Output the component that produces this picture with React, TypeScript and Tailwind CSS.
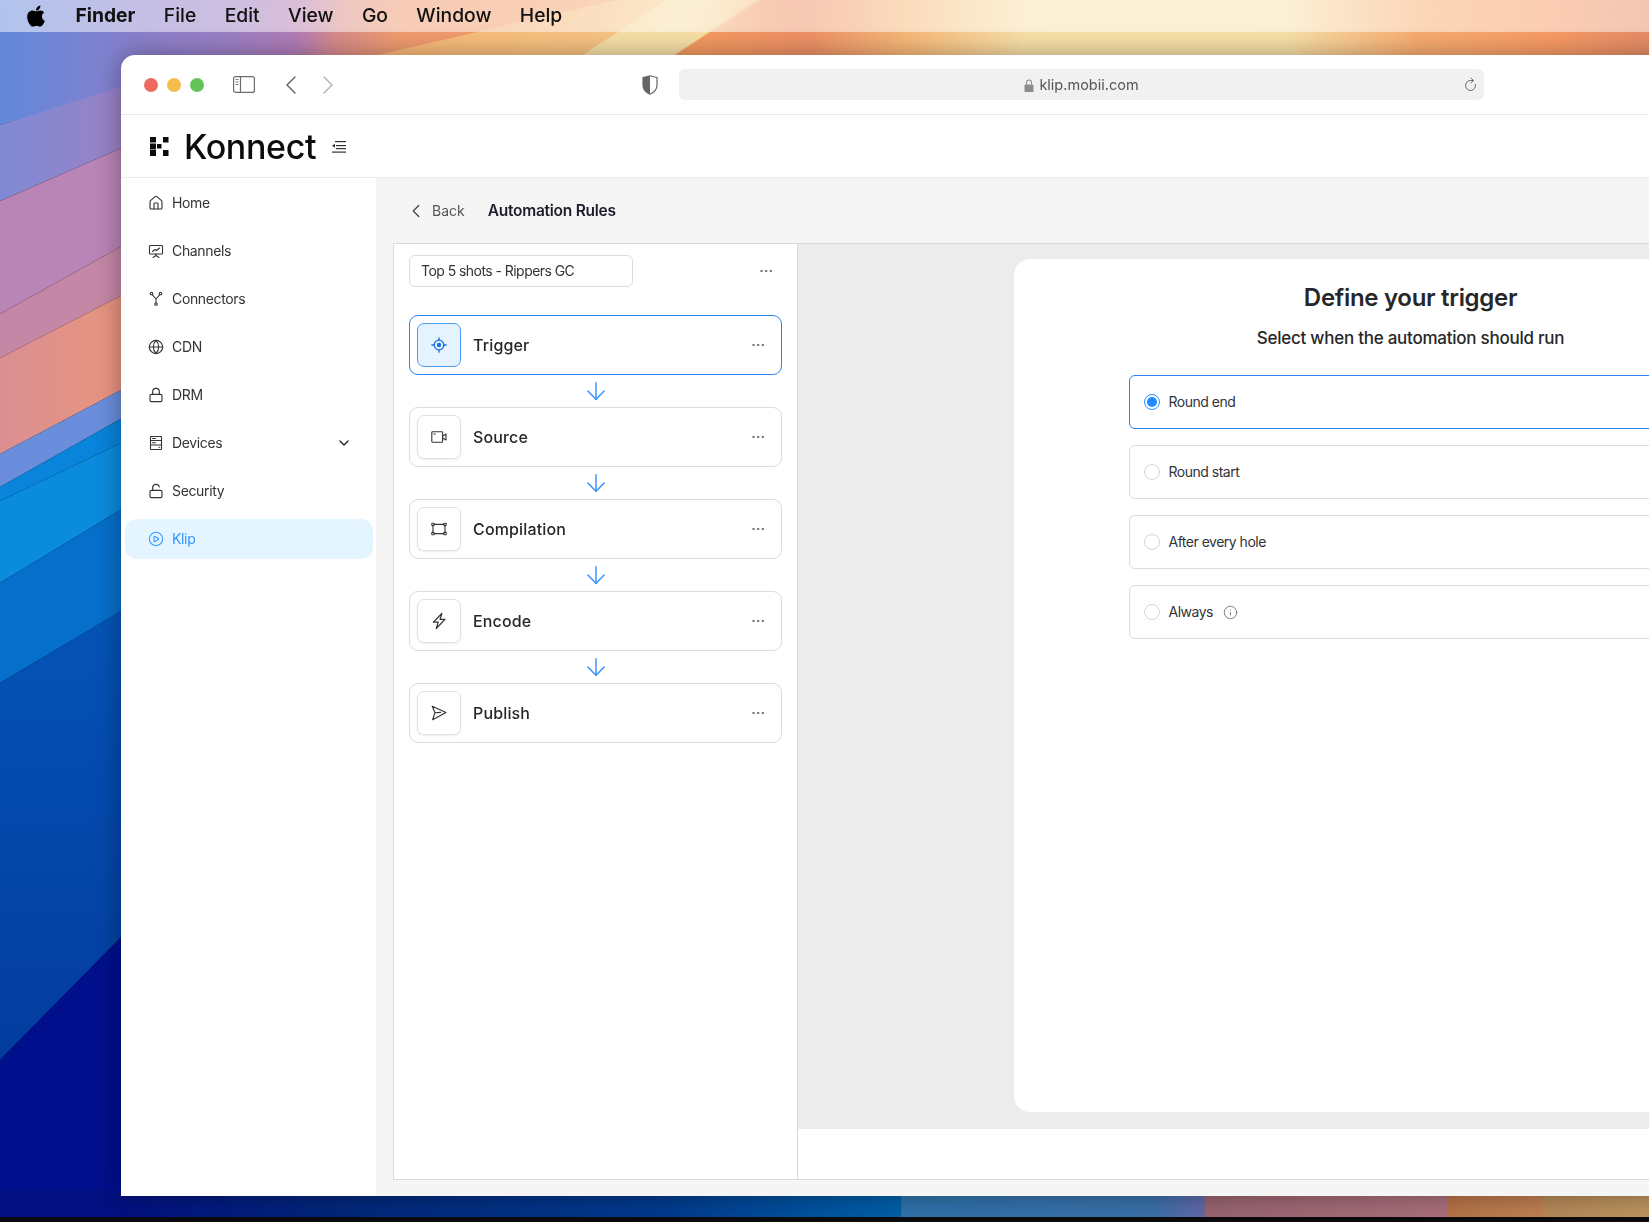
import { ArrowDown, ChevronDown, ChevronLeft, ChevronRight, CirclePlay, Ellipsis, Globe, House, Info, Lock, LockOpen } from 'lucide-react';
import { FaApple } from 'react-icons/fa';
import type { ReactNode } from 'react';

const Glyph = ({ className, children }: { className?: string; children: ReactNode }) => (
  <svg viewBox="0 0 16 16" fill="none" stroke="currentColor" strokeWidth="1.1" strokeLinecap="round" strokeLinejoin="round" className={className}>
    {children}
  </svg>
);

const ChannelsIcon = () => (
  <Glyph className="h-4 w-4">
    <rect x="1.500" y="2.500" width="13" height="8.500" rx="0.800" />
    <path d="M4.500 8.500 7 6.500l1.500 1L11.500 5" />
    <path d="M8 11v1.500M8 12.500 5 14.500M8 12.500l3 2" />
  </Glyph>
);

const ConnectorsIcon = () => (
  <Glyph className="h-4 w-4">
    <circle cx="3.500" cy="2.500" r="1.300" />
    <circle cx="12.500" cy="2.500" r="1.300" />
    <circle cx="8" cy="13" r="1.300" />
    <path d="M4.200 3.700 8 8l3.800-4.300M8 8v3.700" />
  </Glyph>
);

const DevicesIcon = () => (
  <Glyph className="h-4 w-4">
    <rect x="2.500" y="1.500" width="11" height="13" rx="0.600" />
    <path d="M2.500 5.500h11M2.500 10h11M4.500 3.500h3M4.500 7.800h3M11 12.300h.6" />
  </Glyph>
);

const TriggerIcon = () => (
  <svg viewBox="0 0 16 16" fill="none" stroke="currentColor" strokeWidth="1.300" strokeLinecap="round" className="h-4 w-4">
    <circle cx="8" cy="8" r="4.800" />
    <circle cx="8" cy="8" r="2.200" fill="currentColor" stroke="none" />
    <path d="M8 .8v2.400M8 12.800v2.400M.8 8h2.400M12.800 8h2.400" />
  </svg>
);

const SourceIcon = () => (
  <Glyph className="h-4 w-4">
    <rect x="0.800" y="2.800" width="10.800" height="10.400" rx="0.800" />
    <path d="M11.600 7 15 5v6l-3.400-2M2.800 5h1.400" />
  </Glyph>
);

const CompilationIcon = () => (
  <Glyph className="h-4 w-4">
    <rect x="0.800" y="2.200" width="2.400" height="2.400" rx="0.600" />
    <rect x="12.800" y="2.200" width="2.400" height="2.400" rx="0.600" />
    <rect x="0.800" y="11.400" width="2.400" height="2.400" rx="0.600" />
    <rect x="12.800" y="11.400" width="2.400" height="2.400" rx="0.600" />
    <path d="M3.200 3.400h9.600M3.200 12.600h9.600M2 4.600v6.800M14 4.600v6.800" />
  </Glyph>
);

const EncodeIcon = () => (
  <Glyph className="h-[18px] w-[18px]">
    <path d="M10.500 1.300 3 9h4.300L5.600 14.700 13.300 6.500H9L10.500 1.300z" />
  </Glyph>
);

const PublishIcon = () => (
  <Glyph className="h-4 w-4">
    <path d="M1.200 1.300 15 7.400 1.600 14.700 4 7.800zM4 7.800l5.500-.4" />
  </Glyph>
);

const LogoMark = () => (
  <svg viewBox="0 0 19 19" className="h-[19px] w-[19px] fill-[#0c0c0c]">
    <rect x="0" y="0" width="6" height="5.500" />
    <rect x="13" y="0" width="5.500" height="5.500" />
    <rect x="0" y="6.500" width="6" height="6" />
    <rect x="7" y="7" width="4.500" height="4.500" />
    <rect x="0" y="13" width="6" height="6" />
    <rect x="13" y="13" width="5.500" height="6" />
  </svg>
);

const CollapseIcon = () => (
  <svg viewBox="0 0 14 12" className="h-3 w-[14px] fill-[#333]">
    <rect x="3" y="0" width="11" height="1.200" />
    <path d="M0 4.700 3 2.700v4z" />
    <rect x="4" y="4" width="10" height="1.200" />
    <rect x="4" y="7" width="10" height="1.200" />
    <rect x="0" y="10.500" width="14" height="1.200" />
  </svg>
);

const SidebarToggle = () => (
  <svg viewBox="0 0 22 17" fill="none" stroke="#6d6d6d" strokeWidth="1.200" className="h-[17px] w-[22px]">
    <rect x="0.600" y="0.600" width="20.800" height="15.800" rx="2" />
    <path d="M7.500 0.600v15.800" />
    <path d="M2.500 3.500h3M2.500 6h3M2.500 8.500h3" strokeWidth="0.900" />
  </svg>
);

const ShieldIcon = () => (
  <svg viewBox="0 0 16 20" className="h-5 w-4">
    <path d="M8 .8C5.600 1.600 3.500 2.200 1 2.500v7.800c0 4 3 7.200 7 9 4-1.800 7-5 7-9V2.500C12.500 2.200 10.400 1.600 8 .8z" fill="#fff" stroke="#666" strokeWidth="1.200" />
    <path d="M8 .8C5.600 1.600 3.500 2.200 1 2.500v7.800c0 4 3 7.200 7 9z" fill="#666" />
  </svg>
);

const ReloadIcon = () => (
  <svg viewBox="0 0 14 16" fill="none" stroke="#666" strokeWidth="1" strokeLinecap="round" strokeLinejoin="round" className="h-4 w-[14px]">
    <path d="M11.500 7.500A5 5 0 1 1 6.500 3.500H9" />
    <path d="M7 1 9.400 3.500 7 6" />
  </svg>
);

const Wallpaper = () => (
  <svg viewBox="0 0 1649 1222" className="absolute inset-0 h-[1222px] w-[1649px]">
    <defs>
      <linearGradient id="band0" x1="0" x2="1" y1="0" y2="0">
        <stop offset="0" stopColor="#6188da" />
        <stop offset="1" stopColor="#8a7fcc" />
      </linearGradient>
      <linearGradient id="band1" x1="0" x2="1" y1="0" y2="0">
        <stop offset="0" stopColor="#7f8ad4" />
        <stop offset="1" stopColor="#9d80c4" />
      </linearGradient>
      <linearGradient id="band4" x1="0" x2="1" y1="0" y2="0">
        <stop offset="0" stopColor="#db8f92" />
        <stop offset="1" stopColor="#ea957c" />
      </linearGradient>
      <linearGradient id="deep" x1="0" x2="0" y1="0" y2="1">
        <stop offset="0" stopColor="#0554b8" />
        <stop offset="1" stopColor="#033c9e" />
      </linearGradient>
      <linearGradient id="peach" x1="0" x2="1" y1="0" y2="0">
        <stop offset="0" stopColor="#f9b874" />
        <stop offset="1" stopColor="#f6cb8c" />
      </linearGradient>
      <linearGradient id="top" x1="0" x2="1649" y1="0" y2="0" gradientUnits="userSpaceOnUse">
        <stop offset="0" stopColor="#6188da" />
        <stop offset="0.08" stopColor="#8a7fcc" />
        <stop offset="0.14" stopColor="#9b7fc4" />
        <stop offset="0.18" stopColor="#b27cb6" />
        <stop offset="0.205" stopColor="#d88c88" />
        <stop offset="0.24" stopColor="#f09a70" />
        <stop offset="0.42" stopColor="#f59a60" />
        <stop offset="0.49" stopColor="#ee9066" />
        <stop offset="0.55" stopColor="#f7b878" />
        <stop offset="0.62" stopColor="#f8e0a8" />
        <stop offset="0.78" stopColor="#f8e0a8" />
        <stop offset="0.86" stopColor="#f8ac70" />
        <stop offset="0.94" stopColor="#f89b64" />
        <stop offset="1" stopColor="#e68c68" />
      </linearGradient>
      <linearGradient id="bottom" x1="0" x2="1649" y1="0" y2="0" gradientUnits="userSpaceOnUse">
        <stop offset="0.07" stopColor="#021082" />
        <stop offset="0.2" stopColor="#02267a" />
        <stop offset="0.4" stopColor="#023a8e" />
        <stop offset="0.546" stopColor="#0060a8" />
        <stop offset="0.547" stopColor="#2f72aa" />
        <stop offset="0.7" stopColor="#3a70aa" />
        <stop offset="0.73" stopColor="#6268a8" />
        <stop offset="0.731" stopColor="#986470" />
        <stop offset="0.877" stopColor="#aa6f7c" />
        <stop offset="0.878" stopColor="#b57348" />
        <stop offset="0.935" stopColor="#bf8052" />
        <stop offset="0.936" stopColor="#b48858" />
        <stop offset="1" stopColor="#bd9460" />
      </linearGradient>
    </defs>
    <rect width="1649" height="60" fill="url(#top)" />
    <polygon points="617,0 760,0 667,60 356,60" fill="url(#peach)" />
    <polygon points="667,0 756,0 667,60 575,60" fill="#f7dfa6" />
    <polygon points="0,0 140,0 140,84 0,125" fill="url(#band0)" />
    <polygon points="0,125 140,81 140,140 0,201" fill="url(#band1)" />
    <polygon points="0,201 140,140 140,236 0,314" fill="#b984b6" />
    <polygon points="0,314 140,236 140,286 0,358" fill="#c487a6" />
    <polygon points="0,358 140,286 140,380 0,454" fill="url(#band4)" />
    <polygon points="0,454 140,380 140,408 0,487" fill="#6a8edb" />
    <polygon points="0,487 140,408 140,434 0,501" fill="#0884da" />
    <polygon points="0,501 140,434 140,498 0,583" fill="#0b8bdc" />
    <polygon points="0,583 140,498 140,600 0,683" fill="#056fcb" />
    <polygon points="0,683 140,600 140,918 0,1060" fill="url(#deep)" />
    <polygon points="0,1060 140,918 140,1222 0,1222" fill="#000f8c" />
    <rect x="0" y="1190" width="1649" height="32" fill="url(#bottom)" />
    <rect x="0" y="1217" width="1649" height="5" fill="#0b0b0b" />
  </svg>
);

const navItems = [
  { label: 'Home', icon: <House className="h-4 w-4" strokeWidth={1.700} /> },
  { label: 'Channels', icon: <ChannelsIcon /> },
  { label: 'Connectors', icon: <ConnectorsIcon /> },
  { label: 'CDN', icon: <Globe className="h-4 w-4" strokeWidth={1.700} /> },
  { label: 'DRM', icon: <Lock className="h-4 w-4" strokeWidth={1.700} /> },
  { label: 'Devices', icon: <DevicesIcon /> },
  { label: 'Security', icon: <LockOpen className="h-4 w-4" strokeWidth={1.700} /> },
  { label: 'Klip', icon: <CirclePlay className="h-4 w-4" strokeWidth={1.600} /> },
];

const steps = [
  { label: 'Trigger', icon: <TriggerIcon /> },
  { label: 'Source', icon: <SourceIcon /> },
  { label: 'Compilation', icon: <CompilationIcon /> },
  { label: 'Encode', icon: <EncodeIcon /> },
  { label: 'Publish', icon: <PublishIcon /> },
];

const triggerOptions = ['Round end', 'Round start', 'After every hole', 'Always'];

const App = () => {
  return (
    <div className="relative h-[1222px] w-[1649px] overflow-hidden bg-black font-['Inter',sans-serif] text-[#27272a]">
      <Wallpaper />

      {/* Menu bar */}
      <div className="relative flex h-8 items-center gap-[28.400px] bg-white/50 pb-[2px] pl-[26px] text-[19.300px] font-medium text-[#111] backdrop-blur-xl">
        <FaApple className="mr-[1px] mt-[2px] h-[24px] w-[20px] text-black" />
        <span className="font-bold">Finder</span>
        <span>File</span>
        <span>Edit</span>
        <span>View</span>
        <span>Go</span>
        <span>Window</span>
        <span>Help</span>
      </div>

      {/* Browser window */}
      <div className="absolute left-[121px] top-[55px] flex h-[1141px] w-[1920px] flex-col overflow-hidden rounded-t-[14px] bg-white shadow-[0_0_26px_rgba(0,0,0,0.35)]">
        <div className="flex h-[60px] shrink-0 items-center border-b border-[#e9e9e9] pl-[23px]">
          <div className="flex gap-[9px]">
            <span className="h-[14px] w-[14px] rounded-full bg-[#ee6a5f]" />
            <span className="h-[14px] w-[14px] rounded-full bg-[#f5bd4f]" />
            <span className="h-[14px] w-[14px] rounded-full bg-[#61c454]" />
          </div>
          <div className="ml-[29px]"><SidebarToggle /></div>
          <ChevronLeft className="ml-[20px] h-8 w-8 text-[#666]" strokeWidth={1.100} />
          <ChevronRight className="ml-[5px] h-8 w-8 text-[#b5b5b5]" strokeWidth={1.100} />
          <div className="ml-[298px]"><ShieldIcon /></div>
          <div className="relative ml-[21px] flex h-[31px] w-[805px] items-center justify-center gap-[5px] rounded-md bg-[#f1f1f1] pt-[1px] text-[14.500px] text-[#555]">
            <svg viewBox="0 0 10 13" className="h-[13px] w-[10px] fill-[#8d8d8d]">
              <path d="M2 5.500V3.500a3 3 0 0 1 6 0v2h-1V3.500a2 2 0 0 0-4 0v2z" />
              <rect x="0.500" y="5.500" width="9" height="7.500" rx="1" />
            </svg>
            <span>klip.mobii.com</span>
            <div className="absolute right-[6px] top-[8px]"><ReloadIcon /></div>
          </div>
        </div>

        <div className="flex h-[63px] shrink-0 items-center border-b border-[#ececec] pl-[29px]">
          <LogoMark />
          <span className="ml-[15px] mt-[2px] text-[34px] font-medium leading-none tracking-[-0.35px] text-[#0c0c0c]">Konnect</span>
          <div className="ml-[16px] mt-[1px]"><CollapseIcon /></div>
        </div>

        <div className="flex min-h-0 flex-1">
          <nav className="flex w-[255px] shrink-0 flex-col gap-2 pl-1 pr-[3px] pt-[5px]">
            {navItems.map((item) => (
              <div
                key={item.label}
                className={`flex h-10 items-center gap-2 rounded-xl pl-[23px] pr-[21px] text-sm tracking-[-0.35px] ${
                  item.label === 'Klip' ? 'bg-[#e4f5ff] text-[#2f96ff]' : 'text-[#333338]'
                }`}
              >
                {item.icon}
                <span className="flex-1">{item.label}</span>
                {item.label === 'Devices' && <ChevronDown className="h-4 w-4 text-[#222]" strokeWidth={2} />}
              </div>
            ))}
          </nav>

          <main className="flex min-w-0 flex-1 flex-col bg-[#f5f5f5] px-[17px] pb-4">
            <div className="flex h-[65px] shrink-0 items-center pl-3 pt-[1px]">
              <ChevronLeft className="h-[22px] w-[22px] text-[#444]" strokeWidth={1.400} />
              <span className="ml-[5px] text-sm text-[#55555a]">Back</span>
              <span className="ml-[23px] text-[15.500px] font-semibold tracking-[-0.25px] text-[#1c1c2b]">Automation Rules</span>
            </div>

            <div className="flex min-h-0 flex-1 border border-[#d9d9d9] bg-white">
              <div className="flex w-[404px] shrink-0 flex-col border-r border-[#d9d9d9] px-[15px] pt-[11px]">
                <div className="flex items-center justify-between pr-2">
                  <div className="flex h-8 w-[224px] items-center rounded-md border border-[#dcdcdc] pl-[11px] text-sm tracking-[-0.55px] text-[#333338]">
                    Top 5 shots - Rippers GC
                  </div>
                  <Ellipsis className="h-4 w-4 text-[#555]" strokeWidth={1.500} />
                </div>

                <div className="mt-7 flex flex-col items-center">
                  {steps.map((step, index) => {
                    const active = index === 0;
                    return (
                      <div key={step.label} className="flex w-full flex-col items-center">
                        {index > 0 && (
                          <div className="flex h-8 items-center justify-center">
                            <ArrowDown className="h-7 w-7 text-[#3d94ff]" strokeWidth={1.300} />
                          </div>
                        )}
                        <div
                          className={`flex h-[60px] w-full items-center rounded-[9px] border pl-[7px] pr-[15px] ${
                            active ? 'border-[#2b83f0]' : 'border-[#dcdcdc]'
                          }`}
                        >
                          <div
                            className={`flex h-[44px] w-[44px] items-center justify-center rounded-[7px] border ${
                              active ? 'border-[#4a9cf5] bg-[#e5f3ff] text-[#1a6fe0]' : 'border-[#e2e2e2] text-[#333] shadow-[0_1px_2px_rgba(0,0,0,0.08)]'
                            }`}
                          >
                            {step.icon}
                          </div>
                          <span className="ml-3 flex-1 text-base font-medium tracking-[0.15px] text-[#27272a]">{step.label}</span>
                          <Ellipsis className="h-4 w-4 text-[#555]" strokeWidth={1.500} />
                        </div>
                      </div>
                    );
                  })}
                </div>
              </div>

              <div className="flex min-w-0 flex-1 flex-col">
                <div className="flex min-h-0 flex-1 bg-[#ececec] px-[216px] pb-[17px] pt-[15px]">
                  <div className="flex w-full flex-col items-center rounded-2xl bg-white pt-[23px]">
                    <h1 className="text-2xl font-semibold tracking-[-0.3px] text-[#27272a]">Define your trigger</h1>
                    <p className="mt-[12px] text-[17px] font-medium leading-6 tracking-[-0.25px] text-[#27272a]">Select when the automation should run</p>
                    <div className="mt-[25px] flex w-[564px] flex-col gap-4">
                      {triggerOptions.map((option, index) => (
                        <div
                          key={option}
                          className={`flex h-[54px] items-center rounded-md border pl-[14px] text-sm tracking-[-0.5px] text-[#333338] ${
                            index === 0 ? 'border-[#2b83f0]' : 'border-[#dcdcdc]'
                          }`}
                        >
                          <span
                            className={`flex h-4 w-4 items-center justify-center rounded-full border ${
                              index === 0 ? 'border-[#2b8cff]' : 'border-[#d6d6d6]'
                            }`}
                          >
                            {index === 0 && <span className="h-[10px] w-[10px] rounded-full bg-[#1f8bff]" />}
                          </span>
                          <span className="ml-[9px]">{option}</span>
                          {option === 'Always' && <Info className="ml-[10px] h-[15px] w-[15px] text-[#777]" strokeWidth={1.500} />}
                        </div>
                      ))}
                    </div>
                  </div>
                </div>
                <div className="h-[50px] shrink-0 bg-white" />
              </div>
            </div>
          </main>
        </div>
      </div>
    </div>
  );
};

export default App;
